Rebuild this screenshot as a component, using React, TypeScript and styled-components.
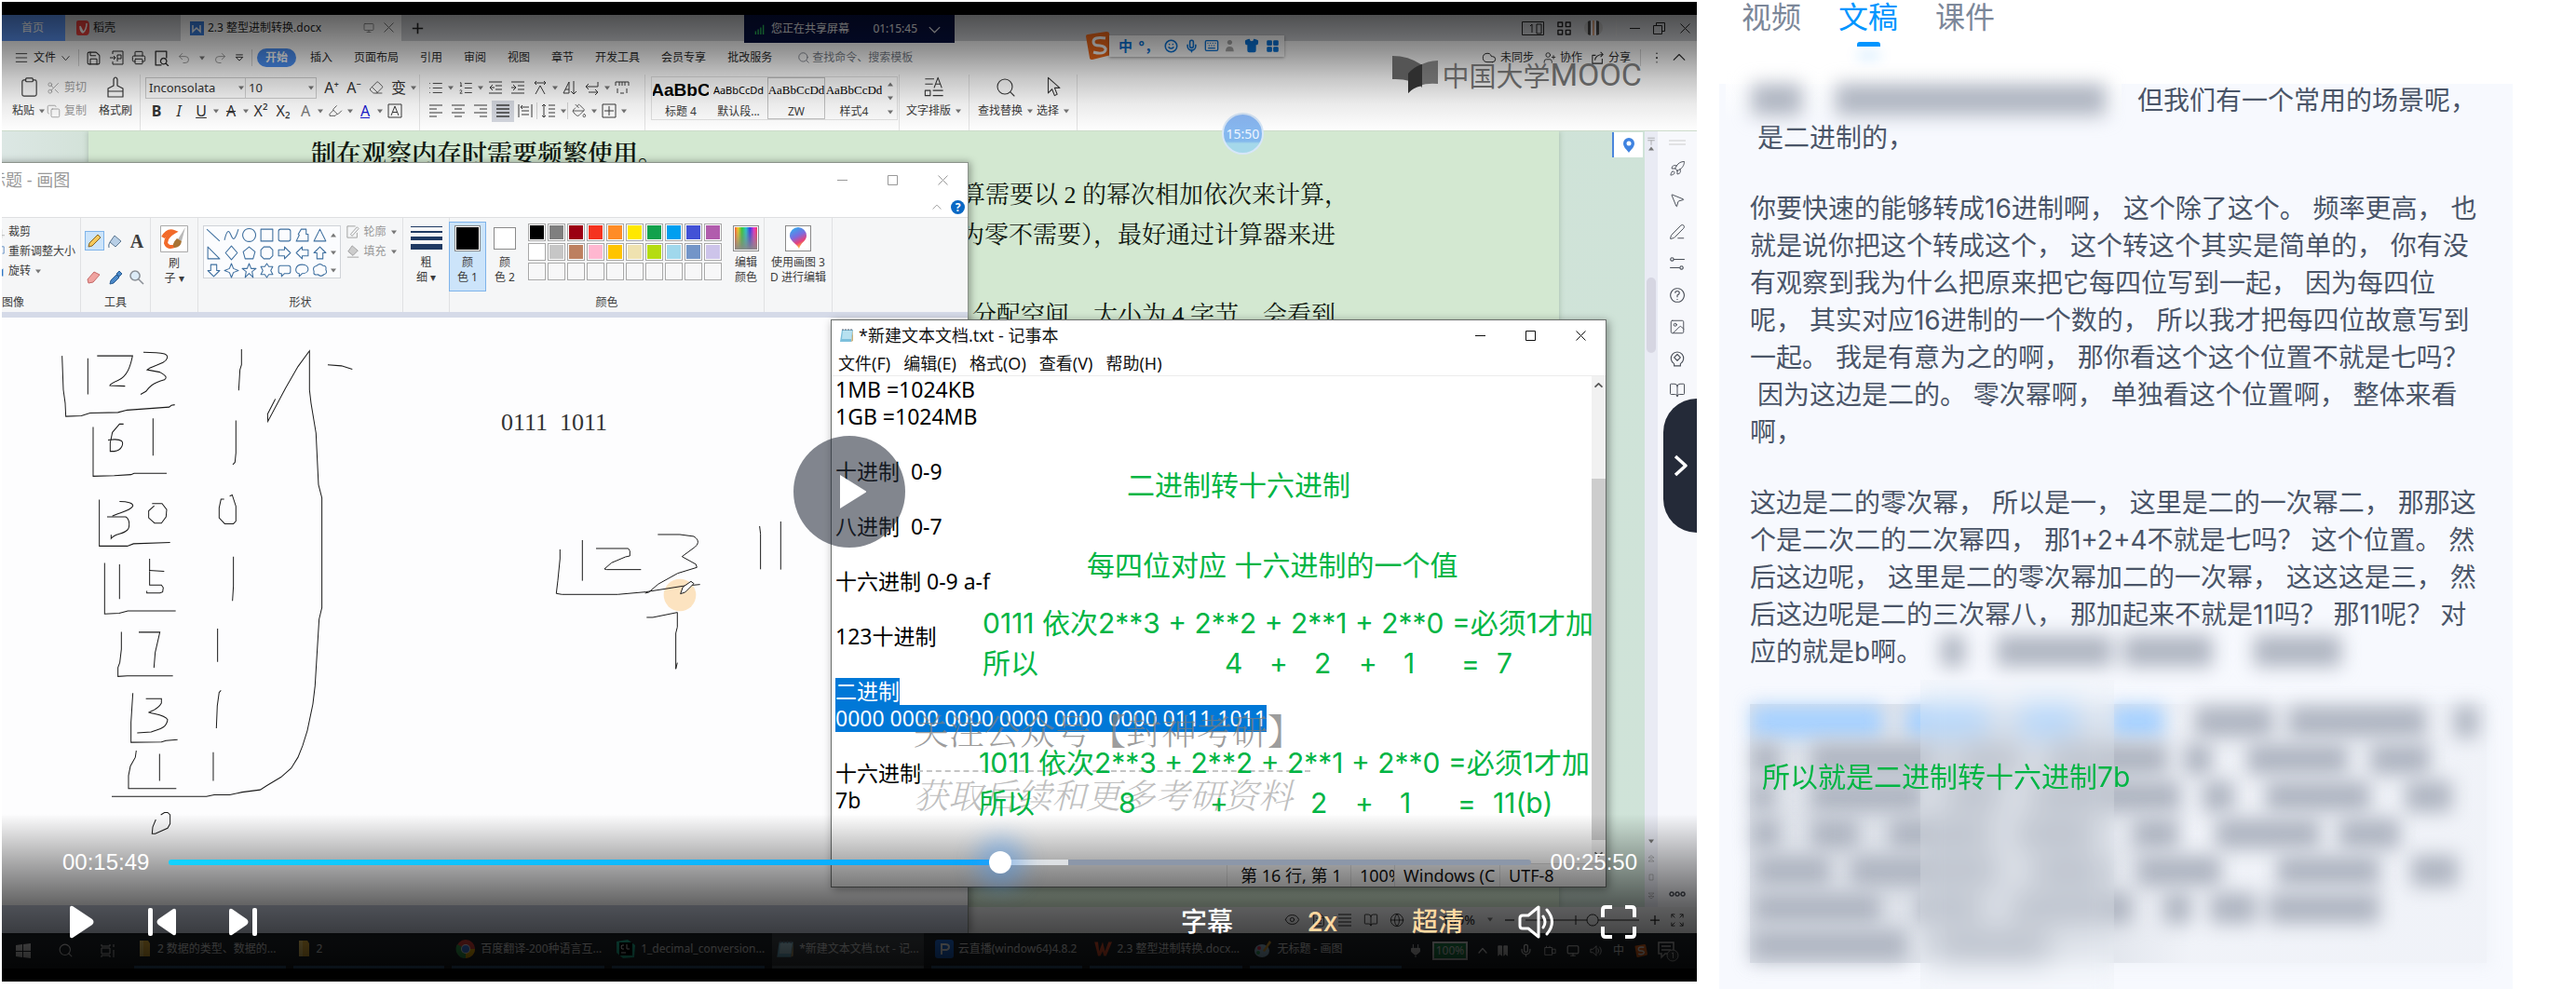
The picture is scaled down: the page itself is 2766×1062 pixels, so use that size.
import React from 'react';
import styled, { createGlobalStyle, css } from 'styled-components';
import {
  Save, Printer, Undo2, Redo2, Search, Cloud, UserPlus, Rocket, MousePointer2, PenLine,
  Eraser, Scissors, Copy, List, ListOrdered, Globe, BookOpen, Eye, LayoutGrid, Smile, Mic,
  Keyboard, Shirt, Monitor, Image as ImageIcon, FileText, Clipboard, Highlighter, PaintBucket,
} from 'lucide-react';

const WIN = '"Noto Sans", "Noto Sans CJK SC", sans-serif';
const MAC = 'Inter, "Noto Sans CJK SC", sans-serif';
const SERIF = '"Liberation Serif", "Noto Serif CJK SC", "Noto Sans CJK SC", serif';
const GREEN = '#00b544';

const Global = createGlobalStyle`
  * { box-sizing: border-box; }
  body { margin: 0; background: #fff; font-family: ${WIN}; }
  button { appearance: none; border: 0; background: none; padding: 0; margin: 0; color: inherit; font: inherit; cursor: pointer; }
  p { margin: 0; }
  svg { display: block; flex: none; }
`;

const Page = styled.div`
  display: grid;
  grid-template-columns: minmax(0, 1fr) 944px;
  min-height: 100vh;
  padding-left: 2px;
`;

/* ---------- player shell ---------- */

const Player = styled.section`
  position: relative;
  align-self: start;
  margin-top: 2px;
  padding: 14px 0;
  background: #000;
  overflow: hidden;
`;
const Frame = styled.div`
  position: relative;
  aspect-ratio: 16 / 9;
  overflow: hidden;
  display: flex;
  flex-direction: column;
  background: #fff;
`;
const TopShade = styled.div`
  position: absolute;
  inset: 0 0 auto 0;
  height: 126px;
  pointer-events: none;
  background: linear-gradient(rgba(0,0,0,.62), rgba(0,0,0,.42) 30%, rgba(0,0,0,.22) 54%, rgba(0,0,0,.08) 76%, transparent);
`;
const BottomShade = styled.div`
  position: absolute;
  inset: auto 0 0 0;
  height: 166px;
  pointer-events: none;
  background: linear-gradient(transparent, rgba(0,0,0,.33) 31%, rgba(0,0,0,.6) 58%, rgba(0,0,0,.7) 76%, rgba(0,0,0,.85));
`;

/* ---------- word processor ---------- */

const Line = styled.div<{ $h: number }>`
  width: 1px;
  height: ${p => p.$h}px;
  background: #d5d5d5;
  flex: none;
`;
const TabBar = styled.div`
  display: flex;
  align-items: center;
  height: 28px;
  flex: none;
  background: #cfd1d5;
  font-size: 12px;
  line-height: 28px;
  color: #222;
`;
const DocTab = styled.button<{ $w: number; $pad: number; $tone?: 'home' | 'active' }>`
  display: flex;
  align-items: center;
  gap: 4px;
  width: ${p => p.$w}px;
  height: 28px;
  padding-left: ${p => p.$pad}px;
  ${p => p.$tone === 'home' && css`background: #5a92f0; color: #fff;`}
  ${p => p.$tone === 'active' && css`background: #fff;`}
`;
const TabTail = styled.span`
  display: flex;
  gap: 10px;
  margin-left: auto;
  padding-right: 8px;
  color: #777;
`;
const AddTab = styled.button`
  width: 34px;
  display: grid;
  place-items: center;
`;
const BarEnd = styled.div<{ $gap: number; $pr: number }>`
  margin-left: auto;
  display: flex;
  align-items: center;
  gap: ${p => p.$gap}px;
  padding-right: ${p => p.$pr}px;
`;
const Avatar = styled.span`
  width: 20px;
  height: 16px;
  border-radius: 8px;
  background: linear-gradient(90deg, #bbb 0 20%, #444 20% 35%, #e6e6ee 35% 45%, #d9a27c 45% 55%, #e6e6ee 55% 65%, #444 65% 80%, #bbb 80%);
`;
const MenuBar = styled.nav`
  display: flex;
  align-items: center;
  height: 36px;
  flex: none;
  font-size: 12px;
  line-height: 20px;
  color: #2b2b2b;
  background: #fff;
`;
const FileMenu = styled.button`
  display: flex;
  align-items: center;
  gap: 6px;
  width: 82px;
  padding-left: 14px;
`;
const QuickTools = styled.div`
  display: flex;
  align-items: center;
  gap: 8px;
  padding: 0 8px 0 7px;
`;
const MenuItems = styled.div`
  display: flex;
  align-items: center;
  gap: 23px;
`;
const StartPill = styled.button`
  width: 42px;
  height: 20px;
  border-radius: 10px;
  margin: 0 -8px 0 5px;
  background: #4a90f5;
  color: #fff;
  font-weight: 700;
`;
const CommandSearch = styled.label`
  display: flex;
  align-items: center;
  margin-left: 27px;
  gap: 2px;
  color: #7a7f8a;
  input { width: 130px; border: 0; padding: 0; background: none; font: inherit; line-height: 20px; }
  input::placeholder { color: #7a7f8a; opacity: 1; }
`;
const IconText = styled.button`
  display: flex;
  align-items: center;
  gap: 4px;
`;
const Ribbon = styled.div`
  display: flex;
  height: 61px;
  flex: none;
  background: #fff;
  font-size: 12px;
  line-height: 20px;
  color: #3a3a3a;
  border-bottom: 1px solid #cddccb;
`;
const RGroup = styled.div<{ $w?: number; $pl?: number }>`
  display: flex;
  flex: none;
  padding-top: 2px;
  padding-left: ${p => p.$pl ?? 5}px;
  ${p => p.$w && css`width: ${p.$w}px;`}
  border-right: 1px solid #e4e4e4;
`;
const Big = styled.button<{ $w: number }>`
  display: flex;
  flex-direction: column;
  align-items: center;
  justify-content: space-between;
  width: ${p => p.$w}px;
  height: 47px;
  white-space: nowrap;
`;
const Stack = styled.div<{ $w?: number; $dim?: boolean }>`
  display: flex;
  flex-direction: column;
  gap: 1px;
  ${p => p.$w && css`width: ${p.$w}px;`}
  ${p => p.$dim && css`color: #9a9a9a;`}
`;
const ToolRow = styled.div`
  display: flex;
  align-items: center;
  height: 24px;
`;
const Tool = styled.button<{ $caret?: boolean; $on?: boolean }>`
  display: flex;
  align-items: center;
  width: ${p => (p.$caret ? 32 : 24)}px;
  height: 23px;
  background: ${p => (p.$on ? '#d5d8e0' : 'none')};
  > span:first-child, > svg:first-child { width: 24px; text-align: center; }
`;
const Glyph = styled.span<{ $c?: string; $b?: boolean; $i?: boolean; $u?: boolean; $s?: boolean }>`
  font-size: 16px;
  line-height: 20px;
  color: ${p => p.$c ?? '#333'};
  font-weight: ${p => (p.$b ? 700 : 400)};
  font-style: ${p => (p.$i ? 'italic' : 'normal')};
  text-decoration: ${p => (p.$u ? 'underline' : p.$s ? 'line-through' : 'none')};
`;
const FontBox = styled.div`
  display: flex;
  align-items: center;
  width: 184px;
  height: 23px;
  margin-right: 4px;
  border: 1px solid #cfcfcf;
`;
const Pick = styled.select<{ $w: number }>`
  appearance: none;
  width: ${p => p.$w}px;
  height: 21px;
  padding: 0 3px;
  border: 0;
  background: none;
  font: 13px/20px ${WIN};
  color: #333;
`;
const StyleBox = styled.div`
  display: flex;
  width: 270px;
  height: 47px;
  border: 1px solid #e2e2e2;
  margin: 0 1px 0 2px;
`;
const StyleCard = styled.button<{ $w: number; $on?: boolean }>`
  width: ${p => p.$w}px;
  height: 45px;
  border: 1px solid ${p => (p.$on ? '#c4c4c4' : 'transparent')};
  display: flex;
  flex-direction: column;
  align-items: center;
  justify-content: space-between;
  overflow: hidden;
`;
const Sample = styled.span<{ $f: string; $s: number; $b?: boolean }>`
  font-family: ${p => p.$f};
  font-size: ${p => p.$s}px;
  font-weight: ${p => (p.$b ? 700 : 400)};
  line-height: 26px;
  color: #000;
`;
const Carets = styled.span`
  display: flex;
  flex-direction: column;
  justify-content: space-around;
  margin: 0 auto;
`;

/* ---------- document area ---------- */

const DocArea = styled.div`
  flex: 1;
  min-height: 0;
  display: flex;
  overflow: hidden;
  background: linear-gradient(90deg, #dce7e4, #d3e2d9 90px, #cfe3d8);
`;
const Sheet = styled.div`
  flex: 1;
  margin: 0 57px 0 93px;
  padding: 4px 240px 0 239px;
  background: #d3e8d1;
  box-shadow: 0 0 6px rgba(80,110,80,.35);
  font-family: ${SERIF};
  font-size: 26px;
  line-height: 43px;
  color: #101810;
  white-space: nowrap;
`;
const Strong = styled.p`
  font-weight: 600;
  font-size: 27px;
`;
const RightLine = styled.p<{ $hang?: boolean }>`
  display: flex;
  justify-content: flex-end;
  min-height: 43px;
  margin-right: ${p => (p.$hang ? '-14px' : '0')};
`;
const PinCol = styled.div`
  width: 35px;
  padding-top: 1px;
`;
const PinBox = styled.button`
  display: grid;
  place-items: center;
  width: 33px;
  height: 27px;
  border-left: 2px solid #4a86dc;
  background: #fff;
`;
const ScrollCol = styled.div`
  width: 14px;
  background: #e9ebf4;
  display: flex;
  flex-direction: column;
  align-items: center;
  padding-top: 6px;
  color: #888;
`;
const ScrollThumb = styled.div`
  width: 10px;
  height: 81px;
  margin-top: 136px;
  border-radius: 5px;
  background: #d6d6e2;
`;
const ScrollEnd = styled.div`
  display: flex;
  flex-direction: column;
  align-items: center;
  gap: 12px;
  margin: auto 0 8px;
`;
const SideTools = styled.div`
  width: 42px;
  background: #f7f8fc;
  display: flex;
  flex-direction: column;
  align-items: center;
  gap: 16px;
  padding: 9px 0 10px;
  color: #4a4f58;
  > svg:last-child { margin-top: auto; }
`;
const StatusBar = styled.div`
  display: flex;
  align-items: center;
  justify-content: flex-end;
  gap: 12px;
  height: 28px;
  padding-right: 14px;
  flex: none;
  background: #f0f1f3;
  font-size: 14px;
  line-height: 20px;
  color: #222;
`;
const TaskBar = styled.div`
  display: flex;
  align-items: stretch;
  height: 38px;
  flex: none;
  background: #20262b;
  color: #e8e8e8;
  font-size: 12px;
  line-height: 36px;
`;
const StartIcons = styled.div`
  display: flex;
  align-items: center;
  gap: 29px;
  width: 143px;
  padding-left: 15px;
`;
const Task = styled.button<{ $on?: boolean }>`
  display: flex;
  align-items: center;
  gap: 5px;
  width: 164px;
  margin-right: 8px;
  padding: 0 4px;
  border-bottom: 3px solid ${p => (p.$on ? '#6c7a86' : '#3f6f9c')};
  background: ${p => (p.$on ? '#42484d' : 'none')};
  white-space: nowrap;
  text-align: left;
`;
const Tray = styled.div`
  display: flex;
  align-items: center;
  gap: 11px;
  margin-left: auto;
  padding-right: 18px;
`;
const Battery = styled.span`
  width: 38px;
  height: 20px;
  border: 2px solid #ddd;
  background: #1f8a4c;
  font-size: 12px;
  line-height: 16px;
  text-align: center;
`;

/* ---------- floating items on the desktop ---------- */

const ShareBanner = styled.div`
  position: absolute;
  left: 797px;
  top: 0;
  width: 226px;
  height: 30px;
  display: flex;
  align-items: center;
  padding: 0 15px 0 11px;
  background: #061040;
  color: #eee;
  font-size: 12px;
  line-height: 30px;
  svg:first-child { margin-right: 7px; }
  time { margin-left: auto; margin-right: 12px; }
`;
const ImeBar = styled.div`
  position: absolute;
  left: 1163px;
  top: 19px;
  width: 214px;
  height: 28px;
  display: flex;
  align-items: center;
`;
const ImeTools = styled.div`
  display: flex;
  align-items: center;
  justify-content: space-between;
  flex: 1;
  height: 23px;
  margin-left: -4px;
  padding: 0 5px 0 10px;
  background: #fff;
  box-shadow: 0 1px 3px rgba(0,0,0,.35);
  color: #0a76dc;
  font-size: 15px;
  line-height: 20px;
  font-weight: 700;
`;
const Brand = styled.div`
  position: absolute;
  right: 59px;
  top: 43px;
  display: flex;
  align-items: center;
  gap: 4px;
  height: 42px;
  color: rgba(78,78,78,.85);
  font-size: 29px;
  line-height: 42px;
  font-family: "Noto Sans CJK SC", sans-serif;
`;
const BrandLatin = styled.span`
  font: 400 34px/42px Roboto, sans-serif;
`;
const BrandText = styled.span`
  display: flex;
`;
const Bubble = styled.div`
  position: absolute;
  left: 1310px;
  top: 105px;
  width: 45px;
  height: 45px;
  border: 2px solid #d7e7f8;
  border-radius: 50%;
  background: linear-gradient(#8cb8f5, #82b8ec 70%, #a5d8ea 76%);
  color: #eef6ff;
  font-size: 14px;
  line-height: 41px;
  text-align: center;
`;

/* ---------- paint window ---------- */

const PaintWindow = styled.section`
  position: absolute;
  left: -60px;
  top: 158px;
  width: 1098px;
  bottom: 38px;
  display: flex;
  flex-direction: column;
  background: #fff;
  border: solid #8b938b;
  border-width: 1px 1px 0 0;
  box-shadow: 2px 0 8px rgba(0,0,0,.35);
  font-size: 12px;
  line-height: 16px;
  color: #3c3c3c;
`;
const PaintTitle = styled.header`
  display: flex;
  align-items: center;
  height: 36px;
  padding: 0 21px 0 28px;
  font-size: 18px;
  line-height: 24px;
  color: #999;
`;
const WinButtons = styled.div<{ $gap: number }>`
  margin-left: auto;
  display: flex;
  align-items: center;
  gap: ${p => p.$gap}px;
`;
const PaintHelp = styled.div`
  display: flex;
  align-items: center;
  justify-content: flex-end;
  gap: 10px;
  height: 22px;
  padding-right: 3px;
`;
const HelpDot = styled.button`
  width: 15px;
  height: 15px;
  border-radius: 50%;
  background: #0a68c4;
  color: #fff;
  font-size: 12px;
  line-height: 15px;
  font-weight: 700;
`;
const PaintRibbon = styled.div`
  display: flex;
  height: 102px;
  background: #f5f6f7;
  border-top: 1px solid #dfe0e2;
`;
const PGroup = styled.div<{ $w: number }>`
  width: ${p => p.$w}px;
  flex: none;
  display: flex;
  flex-direction: column;
  justify-content: space-between;
  align-items: center;
  padding: 4px 0 2px;
  border-right: 1px solid #e0e1e3;
`;
const PBody = styled.div`
  display: flex;
  align-items: flex-start;
`;
const ImageTools = styled.div`
  display: flex;
  flex-direction: column;
  gap: 5px;
  width: 100%;
  padding: 3px 0 0 50px;
`;
const ToolGrid = styled.div`
  display: grid;
  grid-template-columns: repeat(3, 21px);
  grid-auto-rows: 21px;
  gap: 18px 2px;
  padding-top: 10px;
`;
const PTool = styled.button<{ $on?: boolean }>`
  width: 21px;
  height: 21px;
  display: grid;
  place-items: center;
  border: 1px solid ${p => (p.$on ? '#7fb4ea' : 'transparent')};
  background: ${p => (p.$on ? '#cce4fa' : 'none')};
  font: 700 20px/20px "Liberation Serif", serif;
`;
const PBig = styled.button<{ $on?: boolean; $w: number }>`
  width: ${p => p.$w}px;
  height: 75px;
  display: flex;
  flex-direction: column;
  align-items: center;
  padding-top: 3px;
  gap: 4px;
  border: 1px solid ${p => (p.$on ? '#7fb4ea' : 'transparent')};
  background: ${p => (p.$on ? '#cce4fa' : 'none')};
`;
const Well = styled.span<{ $c: string; $s: number }>`
  display: grid;
  place-items: center;
  width: ${p => p.$s}px;
  height: ${p => p.$s}px;
  margin: ${p => (28 - p.$s) / 2}px 0;
  border: 1px solid #8a8a8a;
  background: ${p => p.$c};
  box-shadow: inset 0 0 0 1px #fff;
`;
const PDim = styled.div`
  display: flex;
  flex-direction: column;
  gap: 5px;
  padding: 3px 0 0 6px;
  color: #999;
`;
const Palette = styled.div`
  display: grid;
  grid-template-columns: repeat(10, 19px);
  gap: 2px;
  padding: 2px 6px 0 5px;
`;
const Swatch = styled.button<{ $c: string }>`
  height: 19px;
  border: 1px solid #a8a8a8;
  background: ${p => p.$c};
  box-shadow: inset 0 0 0 1px #fff;
`;
const ShapeBox = styled.div`
  display: grid;
  grid-template-columns: repeat(7, 17px) 8px;
  gap: 2px;
  align-items: center;
  width: 148px;
  height: 57px;
  padding: 1px 2px;
  margin-top: 4px;
  border: 1px solid #d0d3d8;
  background: #fbfcfe;
`;
const Strip = styled.div`
  height: 6px;
  background: #d5dae8;
`;
const PaintCanvas = styled.div`
  position: relative;
  flex: 1;
  margin-left: 60px;
  background: #fdfdfe;
  overflow: hidden;
`;
const CanvasText = styled.p`
  position: absolute;
  left: 536px;
  top: 98px;
  font: 26px/30px "Liberation Serif", serif;
  color: #333;
  white-space: pre;
`;
const Workspace = styled.div`
  height: 30px;
  background: #c5ccdc;
`;

/* ---------- notepad window ---------- */

const Notepad = styled.section`
  position: absolute;
  left: 890px;
  top: 327px;
  width: 833px;
  height: 610px;
  display: flex;
  flex-direction: column;
  background: #fff;
  border: 1px solid #6b6f6d;
  box-shadow: 2px 2px 9px rgba(0,0,0,.4);
  color: #111;
  font-size: 18px;
  line-height: 24px;
`;
const NoteTitle = styled.header`
  display: flex;
  align-items: center;
  gap: 5px;
  height: 32px;
  padding: 0 21px 0 8px;
`;
const NoteMenu = styled.nav`
  display: flex;
  gap: 14px;
  height: 28px;
  padding-left: 7px;
  border-bottom: 1px solid #ececec;
  line-height: 28px;
`;
const NoteBody = styled.div`
  flex: 1;
  display: flex;
  justify-content: space-between;
  min-height: 0;
`;
const NoteText = styled.div`
  display: flex;
  flex-direction: column;
  gap: 30px;
  padding: 0 0 0 4px;
  font-size: 23px;
  line-height: 29px;
  color: #000;
  white-space: pre;
`;
const Selected = styled.span`
  display: table;
  height: 29px;
  background: #0078d7;
  color: #fff;
`;
const NoteScroll = styled.div`
  width: 15px;
  display: flex;
  flex-direction: column;
  justify-content: space-between;
  align-items: center;
  padding: 5px 0;
  background: #f1f1f1;
`;
const NoteThumb = styled.div`
  width: 15px;
  flex: 1;
  margin: 96px 0 11px;
  background: #cdcdcd;
`;
const NoteStatus = styled.footer`
  display: grid;
  grid-template-columns: 133px 47px 113px 114px;
  justify-content: end;
  height: 25px;
  background: #f0f0f0;
  border-top: 1px solid #d7d7d7;
  white-space: nowrap;
`;
const NoteCell = styled.span`
  overflow: hidden;
  border-left: 1px solid #d7d7d7;
  padding-left: 9px;
  &:first-child { padding-left: 14px; }
`;
const GhostLine = styled.p<{ $y: number; $s: number; $c: string; $i?: boolean }>`
  position: absolute;
  left: 979px;
  top: ${p => p.$y}px;
  width: 424px;
  font-family: ${SERIF};
  font-weight: 300;
  font-size: ${p => p.$s}px;
  line-height: 44px;
  font-style: ${p => (p.$i ? 'italic' : 'normal')};
  color: ${p => p.$c};
  white-space: nowrap;
`;
const GhostRule = styled.div`
  position: absolute;
  left: 983px;
  top: 811px;
  width: 422px;
  border-top: 2px dashed #c4c4c4;
`;

/* ---------- annotations and player controls ---------- */

const Note = styled.div<{ $x: number; $y: number }>`
  position: absolute;
  left: ${p => p.$x}px;
  top: ${p => p.$y}px;
  font-family: ${MAC};
  font-size: 30px;
  line-height: 43px;
  color: ${GREEN};
  white-space: nowrap;
`;
const Terms = styled.div<{ $cols: string }>`
  display: grid;
  grid-template-columns: ${p => p.$cols};
`;
const CenterPlay = styled.button`
  position: absolute;
  left: 50%;
  top: 50%;
  width: 120px;
  height: 120px;
  margin: -60px;
  border-radius: 50%;
  display: grid;
  place-items: center;
  background: rgba(36,42,56,.57);
`;
const Drawer = styled.button`
  position: absolute;
  right: 0;
  top: 426px;
  width: 36px;
  height: 144px;
  border-radius: 36px 0 0 36px;
  display: grid;
  place-items: center;
  background: #242a38;
`;
const Controls = styled.div`
  position: absolute;
  inset: auto 0 0 0;
  padding: 0 64px 44px 65px;
  color: #fff;
`;
const TimeRow = styled.div`
  display: flex;
  align-items: center;
  gap: 21px;
  height: 30px;
  font: 24px/30px "Liberation Sans", sans-serif;
`;
const Seek = styled.input`
  appearance: none;
  flex: 1;
  min-width: 0;
  height: 6px;
  margin: 0;
  border-radius: 3px;
  background: linear-gradient(90deg, #12d2ff, #08a6ff 61%, #dde0e3 61% 66%, #8c97a9 66%);
  &::-webkit-slider-thumb {
    appearance: none;
    width: 24px;
    height: 24px;
    border-radius: 50%;
    background: #fff;
    box-shadow: 0 0 24px 14px rgba(70,150,240,.45);
  }
`;
const ButtonRow = styled.div`
  display: flex;
  align-items: center;
  height: 40px;
  margin-top: 29px;
`;
const Cluster = styled.div<{ $gap: number; $end?: boolean }>`
  display: flex;
  align-items: center;
  gap: ${p => p.$gap}px;
  margin-left: ${p => (p.$end ? 'auto' : '0')};
  margin-right: ${p => (p.$end ? '56px' : '0')};
`;
const IconButton = styled.button`
  width: 40px;
  height: 40px;
  display: grid;
  place-items: center;
`;
const TextButton = styled.button<{ $warm?: boolean }>`
  width: 60px;
  font: 500 28px/36px ${MAC};
  color: ${p => (p.$warm ? '#ffd9a1' : '#fff')};
`;

/* ---------- transcript ---------- */

const Sidebar = styled.aside`
  display: flex;
  flex-direction: column;
  padding: 0 68px 0 24px;
  font-family: ${MAC};
`;
const Tabs = styled.div`
  display: flex;
  gap: 40px;
  height: 50px;
  margin-bottom: 40px;
  padding-left: 24px;
`;
const Tab = styled.button<{ $on?: boolean }>`
  display: flex;
  flex-direction: column;
  align-items: center;
  justify-content: space-between;
  font-size: 32px;
  line-height: 38px;
  color: ${p => (p.$on ? '#0095ff' : '#7c8799')};
`;
const TabMark = styled.span`
  width: 25px;
  height: 5px;
  border-radius: 3px 3px 0 0;
  background: #0095ff;
  box-shadow: 0 12px 14px rgba(0,149,255,.28);
`;
const Script = styled.article`
  position: relative;
  flex: 1;
  padding: 0 28px 0 33px;
  background: #f7f9fe;
  color: #4a5568;
  font-size: 28px;
  line-height: 40px;
`;
const Para = styled.p`
  margin-bottom: 36px;
  white-space: pre;
  &:first-of-type { margin-top: -2px; }
`;
const Smear = styled.span`
  display: inline-flex;
  align-items: center;
  height: 38px;
  vertical-align: top;
  filter: blur(10px);
`;
const Blob = styled.span<{ $skip: number; $w: number; $blue?: boolean }>`
  width: ${p => p.$w}px;
  margin-left: ${p => p.$skip}px;
  height: 34px;
  background: ${p => (p.$blue ? '#a6d1ff' : '#b0b6c2')};
`;
const SmearRows = styled.div`
  display: flex;
  flex-direction: column;
  gap: 2px;
  background: linear-gradient(90deg, rgba(176,184,196,.32), rgba(176,184,196,.36) 45%, rgba(190,196,206,.12) 60%, rgba(190,196,206,.12));
  box-shadow: 0 0 16px 4px rgba(200,205,214,.12);
`;
const Haze = styled.div`
  position: absolute;
  left: 216px;
  top: 640px;
  width: 208px;
  bottom: 0;
  background: rgba(236,239,243,.2);
  backdrop-filter: blur(12px);
`;
const HeadHaze = styled.div`
  position: absolute;
  left: 7px;
  top: -17px;
  width: 425px;
  height: 57px;
  background: linear-gradient(#fff, rgba(247,249,254,.2));
`;
const ScriptNote = styled.p`
  position: absolute;
  left: 46px;
  top: 724px;
  font-size: 30px;
  color: ${GREEN};
  white-space: nowrap;
`;

/* ---------- small drawings ---------- */

type PProps = { d: string; s?: number; w?: number; h?: number; vb?: string; sw?: number; fill?: string; c?: string };
const P = ({ d, s = 16, w, h, vb = '0 0 16 16', sw = 1, fill = 'none', c = 'currentColor' }: PProps) => (
  <svg width={w ?? s} height={h ?? s} viewBox={vb} fill={fill} stroke={c} strokeWidth={sw} strokeLinejoin="round">
    <path d={d} />
  </svg>
);
const Caret = ({ up }: { up?: boolean }) => (
  <svg width="8" height="5" viewBox="0 0 8 5"><path d={up ? 'M1 4.500h6L4 .5z' : 'M1 .5h6L4 4.500z'} fill="#777" /></svg>
);
const Min = ({ c = 'currentColor' }) => <P s={11} vb="0 0 11 11" d="M0 5.500h11" c={c} />;
const Max = ({ c = 'currentColor' }) => <P s={11} vb="0 0 11 11" d="M.5.5h10v10h-10z" c={c} />;
const Close = ({ c = 'currentColor' }) => <P s={11} vb="0 0 11 11" d="M.5.5l10 10M10.500.5l-10 10" c={c} />;
const Folder = () => (
  <svg width="16" height="20" viewBox="0 0 16 20"><path d="M2 1h9l2 3v14H2z" fill="#f0b93c" /><path d="M2 1h4v17H2z" fill="#ffd970" /></svg>
);
const NotepadIcon = ({ s = 16 }) => (
  <svg width={s} height={s} viewBox="0 0 16 16">
    <path d="M3 2h12l-2 13H1z" fill="#7cc0dc" /><path d="M4 3h10l-1 9H3z" fill="#b7e1f0" /><path d="M4 1v2M7 1v2M10 1v2M13 1v2" stroke="#667" />
    <path d="M13 15l2-13v12z" fill="#c9b079" />
  </svg>
);
const SogouIcon = ({ s = 30 }) => (
  <svg width={s} height={s} viewBox="0 0 30 30">
    <path d="M1 5Q1 3 3 3L23 0Q26 0 26 2L30 22Q30 25 28 25L8 30Q5 30 5 28z" fill="#f26a1b" />
    <path d="M22 7Q9 5 9 11Q9 15 16 15Q23 16 22 20Q20 25 9 22" fill="none" stroke="#fff" strokeWidth="3" />
  </svg>
);
const lines = (a: number[][]) => a.map(([x1, x2, y]) => `M${x1} ${y}H${x2}`).join('');
const JUST = lines([[1, 15, 2], [1, 15, 6], [1, 15, 10], [1, 15, 14]]);
const LEFT = lines([[1, 15, 2], [1, 9, 6], [1, 15, 10], [1, 9, 14]]);
const CENTER = lines([[1, 15, 2], [4, 12, 6], [1, 15, 10], [4, 12, 14]]);
const RIGHT = lines([[1, 15, 2], [7, 15, 6], [1, 15, 10], [7, 15, 14]]);

const SHAPES = [
  'M1 2l13 12', 'M1 13C4 0 6 4 8 9S12 12 15 2', 'M8 1.500a6.500 6.500 0 1 0 .1 0z', 'M2 2h12v12H2z', 'M4 2h8q2 0 2 2v8q0 2-2 2H4q-2 0-2-2V4q0-2 2-2z', 'M2 14l3-6-1-1 3-5h5v5h2v7z', 'M8 2l6 12H2z',
  'M2 2v12h12z', 'M8 1l6 7-6 7-6-7z', 'M8 2l6 5-2 7H4L2 7z', 'M5 2h6l3 3v6l-3 3H5l-3-3V5z', 'M2 5h6V2l6 6-6 6v-3H2z', 'M14 5H8V2L2 8l6 6v-3h6z', 'M5 14V8H2l6-6 6 6h-3v6z',
  'M5 2v6H2l6 6 6-6h-3V2z', 'M8 1l2 5 5 2-5 2-2 5-2-5-5-2 5-2z', 'M8 1l2 5h5l-4 3 1 6-4-4-4 4 1-6-4-3h5z', 'M8 1l2 3h4l-2 4 2 4h-4l-2 3-2-3H2l2-4-2-4h4z', 'M4 3h8q2 0 2 2v4q0 2-2 2H8l-3 3v-3H4q-2 0-2-2V5q0-2 2-2z', 'M8 2C0 2 0 11 5 11v3l3-3C16 11 16 2 8 2z', 'M5 3Q8 0 11 3 15 3 14 7 16 11 12 12 9 15 6 12 1 13 2 9 0 4 5 3z',
];
const COLORS = ['#000', '#7f7f7f', '#9b0012', '#f5331f', '#ff8c26', '#ffe800', '#12a14c', '#009ff0', '#4352d6', '#b15cad', '#fff', '#c6c6c6', '#bd8060', '#ffb7d0', '#ffc400', '#efe2b0', '#b5dc12', '#a0d8ec', '#7395c8', '#cdc4ea', ...Array(10).fill('#f7f7f8')];

const STROKES = [
  'M200 118L204 220L210 260L212 300L262 298L290 290L380 288L410 281L545 272L552 267L563 265', 'M283 125V234',
  'M313 118H427C420 150 410 180 380 192C365 198 355 204 354 207L403 209',
  'M462 107C490 107 510 107 530 112C545 118 540 130 525 138C505 148 485 150 474 160L515 167C540 180 537 185 530 190C490 200 480 212 470 225L453 234',
  'M778 98V145L773 160L769 222', 'M300 332V480L368 478L422 475L432 471H537',
  'M398 323H385L362 348L355 380V405H368C395 402 398 380 392 374C380 366 360 370 348 371', 'M493 306V418', 'M760 312V410L757 438L750 445',
  'M320 550V690H410L430 683L548 679', 'M385 556C410 556 430 560 428 570C420 585 380 590 362 600', 'M345 602H405C420 610 418 635 410 642C395 655 370 652 358 667V656',
  'M490 562H522L537 580L535 602L520 621H498L479 605V584L497 569', 'M722 549H712L706 575V605L724 623H752L760 615V570L748 536L740 540',
  'M337 741V894L384 892L412 885H566', 'M385 745V849', 'M482 728V807H520L526 815L524 828L515 831H473V825M480 763L529 766', 'M752 722V810L749 855',
  'M391 948V1000L386 1040L380 1055V1082L410 1080H557', 'M447 949H515L500 1010L496 1056', 'M701 938V1038',
  'M428 1132L422 1220V1280L520 1279L535 1275L572 1272', 'M470 1149H520V1162C510 1180 490 1185 480 1190C500 1196 530 1196 540 1212C535 1240 510 1240 487 1249L442 1252', 'M712 1124L706 1130L700 1170L697 1238',
  'M439 1305L436 1325L420 1352L414 1380V1419H568', 'M514 1315V1396', 'M687 1310V1396',
  'M360 1443H665L690 1438H740L780 1430L838 1423L860 1410L905 1385L938 1358L960 1325L975 1290L990 1245L1008 1165L1015 1110L1028 910L1037 875V545L1026 505L1018 350L1002 260L997 220V103L960 150L920 215L863 315L862 293L887 248',
  'M1056 145L1100 148L1135 158', 'M502 1512L492 1535L490 1555H500L540 1538L548 1525V1498L540 1491H530L518 1498',
];
const STROKES_MID = [
  'M304 750V780L297 850L292 892L310 895H490L580 887L700 868L755 863', 'M376 720V851', 'M420 747H524L529 755V771L515 774L470 793L447 813L455 815H565',
  'M619 702H690L735 708C755 720 750 735 735 745L697 773L742 798L745 808L683 827L620 862L590 888L578 891',
  'M583 969H603L682 953V1000L677 1020V1135L682 1115', 'M947 675L950 700V814', 'M1015 660V815',
];

const BLOBS: [number, number, boolean?][][] = [
  [[2, 140, true], [26, 90, true], [30, 66, true], [34, 56, true], [34, 84], [16, 148], [30, 26]],
  [[2, 30], [34, 140], [16, 70], [26, 130], [18, 30], [38, 108], [24, 64]],
  [[2, 24], [40, 120], [24, 60], [30, 162], [24, 34], [34, 112], [38, 50]],
  [[2, 30], [34, 50], [34, 110], [26, 86], [40, 48], [40, 112], [20, 66]],
  [[6, 80], [22, 160], [34, 80], [34, 90], [60, 110], [34, 50]],
  [[4, 136], [40, 70], [30, 130], [34, 30], [20, 50], [12, 120]],
  [[2, 166], [32, 120]],
];

const MENUS = ['插入', '页面布局', '引用', '审阅', '视图', '章节', '开发工具', '会员专享', '批改服务'];

function Writer() {
  return (
    <>
      <TabBar>
        <DocTab $w={68} $pad={21} $tone="home">首页</DocTab>
        <DocTab $w={124} $pad={12}>
          <svg width="14" height="16" viewBox="0 0 14 16"><path d="M2 0h8q4 0 4 5v6q0 5-4 5H2q-2 0-2-2V2q0-2 2-2z" fill="#e8403c" /><path d="M4 6q0 6 3 7 4-3 4-10M4 6l3 6" stroke="#fff" strokeWidth="1.500" fill="none" /></svg>
          稻壳
        </DocTab>
        <DocTab $w={237} $pad={10} $tone="active">
          <svg width="15" height="15" viewBox="0 0 15 15"><path d="M0 0h15v15H0z" fill="#3a7fe0" /><path d="M3 4v7l4-4 4 4V4" stroke="#fff" strokeWidth="1.500" fill="none" /></svg>
          2.3 整型进制转换.docx
          <TabTail><Monitor size={12} strokeWidth={1.5} /><Close /></TabTail>
        </DocTab>
        <AddTab aria-label="新建标签"><P s={13} d="M8 1v14M1 8h14" sw={2} /></AddTab>
        <BarEnd $gap={14} $pr={7}>
          <P w={24} h={15} vb="0 0 24 15" d="M.5.5h23v14H.5zM9 5l2-2v9M16 3h5v10h-5z" />
          <P s={15} d="M1 1h5v5H1zM10 1h5v5h-5zM1 10h5v5H1zM10 10h5v5h-5z" sw={1.5} />
          <Avatar />
          <Line $h={18} />
          <Min />
          <BarEnd $gap={16} $pr={0}><P s={13} vb="0 0 13 13" d="M.5 3.500h9v9h-9zM3.500 3.500v-3h9v9h-3" /><Close /></BarEnd>
        </BarEnd>
      </TabBar>
      <MenuBar>
        <FileMenu><P s={14} d="M1 3h14M1 8h14M1 13h14" />文件<P s={9} d="M1 4l7 8 7-8" sw={1.5} /></FileMenu>
        <Line $h={18} />
        <QuickTools>
          <Save size={17} strokeWidth={1.5} /><P s={16} d="M4 4V1h11v14H4v-3M1 8h6M5 6l2 2-2 2M9 12V5h4v4H9" /><Printer size={16} strokeWidth={1.5} />
          <P s={17} d="M13 8V1H2v14h6M10 8a3 3 0 1 0 .1 0M12 13l3 3" sw={1.2} />
          <Undo2 size={15} strokeWidth={1.5} color="#999" /><Caret /><Redo2 size={15} strokeWidth={1.5} color="#999" /><P s={10} d="M2 3h12M2 7h12l-6 6z" sw={1.5} />
        </QuickTools>
        <Line $h={18} />
        <MenuItems>
          <StartPill>开始</StartPill>
          {MENUS.map(m => <button key={m}>{m}</button>)}
        </MenuItems>
        <CommandSearch><Search size={14} strokeWidth={1.5} /><input aria-label="查找命令" placeholder="查找命令、搜索模板" /></CommandSearch>
        <BarEnd $gap={10} $pr={12}>
          <IconText><Cloud size={16} strokeWidth={1.5} />未同步</IconText>
          <IconText><UserPlus size={14} strokeWidth={1.5} />协作</IconText>
          <IconText><P s={14} d="M5 5H1v10h12V9M4 11Q5 4 14 4M11 1l3 3-3 3" sw={1.2} />分享</IconText>
          <Line $h={18} />
          <P s={14} d="M8 2v1M8 7v2M8 13v1" sw={2} />
          <P s={14} d="M1 11l7-7 7 7" sw={1.3} />
        </BarEnd>
      </MenuBar>
      <Ribbon>
        <RGroup $w={149} $pl={10}>
          <Big $w={38}><Clipboard size={23} strokeWidth={1.2} /><IconText as="span">粘贴<Caret /></IconText></Big>
          <Stack $w={50} $dim>
            <ToolRow><IconText><Scissors size={15} strokeWidth={1.3} />剪切</IconText></ToolRow>
            <ToolRow><IconText><Copy size={15} strokeWidth={1.3} />复制</IconText></ToolRow>
          </Stack>
          <Big $w={48}><P w={20} h={24} vb="0 0 20 24" d="M8 10V3q2-4 4 0v7l6 3v9H2v-9zM2 16h16" sw={1.2} />格式刷</Big>
        </RGroup>
        <RGroup $w={300} $pl={5}>
          <Stack>
            <ToolRow>
              <FontBox>
                <Pick $w={98} aria-label="字体"><option>Inconsolata</option></Pick><Caret />
                <Line $h={21} />
                <Pick $w={66} aria-label="字号"><option>10</option></Pick><Caret />
              </FontBox>
              <Tool><Glyph>A⁺</Glyph></Tool><Tool><Glyph>A⁻</Glyph></Tool><Tool><Eraser size={16} strokeWidth={1.2} /></Tool>
              <Tool $caret><Glyph>变</Glyph><Caret /></Tool>
            </ToolRow>
            <ToolRow>
              <Tool><Glyph $b>B</Glyph></Tool><Tool><Glyph $i>I</Glyph></Tool><Tool $caret><Glyph $u>U</Glyph><Caret /></Tool>
              <Tool $caret><Glyph $s>A</Glyph><Caret /></Tool><Tool><Glyph>X²</Glyph></Tool><Tool><Glyph>X₂</Glyph></Tool>
              <Tool $caret><Glyph $c="#777">A</Glyph><Caret /></Tool><Tool $caret><Highlighter size={16} strokeWidth={1.2} /><Caret /></Tool>
              <Tool $caret><Glyph $u $c="#1a1ad0">A</Glyph><Caret /></Tool><Tool><P s={16} d="M1 1h14v14H1zM4 13l4-10 4 10M5.500 9.500h5" /></Tool>
            </ToolRow>
          </Stack>
        </RGroup>
        <RGroup $w={242} $pl={5}>
          <Stack>
            <ToolRow>
              <Tool $caret><List size={17} strokeWidth={1.3} /><Caret /></Tool><Tool $caret><ListOrdered size={17} strokeWidth={1.3} /><Caret /></Tool>
              <Tool><P d="M1 2h14M8 6h7M8 10h7M1 14h14M5 5L2 8l3 3M2 8h5" /></Tool><Tool><P d="M1 2h14M8 6h7M8 10h7M1 14h14M3 5l3 3-3 3M1 8h5" /></Tool>
              <Tool $caret><P d="M2 3h12M4 1L2 3l2 2M12 1l2 2-2 2M3 15L8 6l5 9" /><Caret /></Tool><Tool><P d="M1 14L7 2v12zM3 10h4M12 1v14M9 12l3 3 3-3" /></Tool>
              <Tool $caret><P d="M14 2v5H2M4 4L1 7l3 3M4 13h10M11 10l3 3-3 3" /><Caret /></Tool><Tool><P d="M1 6V2h14v4M5 2v4M8 2v4M11 2v4M3 9v5M13 9v5M6 14h4" /></Tool>
            </ToolRow>
            <ToolRow>
              <Tool><P d={LEFT} /></Tool><Tool><P d={CENTER} /></Tool><Tool><P d={RIGHT} /></Tool><Tool $on><P d={JUST} sw={1.3} /></Tool>
              <Tool><P d="M1 1v14M15 1v14M4 4h8M4 8h8M4 12h8M5 2L3 4l2 2" /></Tool>
              <Line $h={18} />
              <Tool $caret><P d="M8 2h7M8 6h7M8 10h7M8 14h7M3 1v14M1 3l2-2 2 2M1 13l2 2 2-2" /><Caret /></Tool>
              <Line $h={18} />
              <Tool $caret><PaintBucket size={16} strokeWidth={1.2} /><Caret /></Tool><Tool $caret><P d="M1 1h14v14H1zM8 3v10M3 8h10" /><Caret /></Tool>
            </ToolRow>
          </Stack>
        </RGroup>
        <RGroup $w={273} $pl={4}>
          <StyleBox>
            <StyleCard $w={62}><Sample $f='"Liberation Sans", sans-serif' $s={19} $b>AaBbC</Sample>标题 4</StyleCard>
            <StyleCard $w={62}><Sample $f='"Noto Sans", sans-serif' $s={11}>AaBbCcDd</Sample>默认段...</StyleCard>
            <StyleCard $w={62} $on><Sample $f='"Liberation Serif", serif' $s={13}>AaBbCcDd</Sample>ZW</StyleCard>
            <StyleCard $w={62}><Sample $f='"Liberation Serif", serif' $s={13}>AaBbCcDd</Sample>样式4</StyleCard>
            <Carets><Caret up /><Caret /><Caret /></Carets>
          </StyleBox>
        </RGroup>
        <RGroup $w={75} $pl={8}>
          <Big $w={58}><P s={22} d="M1 2h7M1 6h6M1 11h4v4H1zM7 11h8M7 15h8M8 9l3-8 3 8M9 6h4" sw={0.8} /><IconText as="span">文字排版<Caret /></IconText></Big>
        </RGroup>
        <RGroup $w={116} $pl={8}>
          <Big $w={62}><Search size={24} strokeWidth={1.1} /><IconText as="span">查找替换<Caret /></IconText></Big>
          <Big $w={40}><P s={22} d="M4 1v12l3-3 2 5 2-1-2-5h4z" sw={0.8} /><IconText as="span">选择<Caret /></IconText></Big>
        </RGroup>
      </Ribbon>
      <DocArea>
        <Sheet>
          <Strong>制在观察内存时需要频繁使用。</Strong>
          <RightLine $hang>算需要以 2 的幂次相加依次来计算，</RightLine>
          <RightLine>（为零不需要），最好通过计算器来进</RightLine>
          <RightLine />
          <RightLine>分配空间，大小为 4 字节，会看到</RightLine>
        </Sheet>
        <PinCol>
          <PinBox aria-label="定位"><svg width="16" height="18" viewBox="0 0 16 18"><path d="M8 1a6 6 0 0 1 6 6c0 4-4 7-6 10C6 14 2 11 2 7a6 6 0 0 1 6-6z" fill="#3f83e0" /><circle cx="8" cy="7" r="2.500" fill="#fff" /></svg></PinBox>
        </PinCol>
        <ScrollCol>
          <P s={10} d="M2 2h12M2 6h12M8 6v8" />
          <Caret up />
          <ScrollThumb />
          <ScrollEnd><Caret /><P s={8} d="M2 6l6-5 6 5zM2 14l6-5 6 5z" /><P s={8} d="M4 2h8v12H4z" /><P s={8} d="M2 2l6 5 6-5zM2 9l6 5 6-5z" /></ScrollEnd>
        </ScrollCol>
        <SideTools>
          <P w={18} h={6} vb="0 0 18 6" d="M0 1h18M0 5h18" c="#ccc" />
          <Rocket size={18} strokeWidth={1.3} /><MousePointer2 size={18} strokeWidth={1.3} /><PenLine size={18} strokeWidth={1.3} />
          <P s={18} d="M5 4h10M3 2.500a1.500 1.500 0 1 0 .1 0M1 12h9M12 10.500a1.500 1.500 0 1 0 .1 0" />
          <P s={18} d="M8 1.500a6.500 6.500 0 1 0 .1 0M6 6q0-2 2-2t2 2q0 1-2 2v2M8 11.500v1" />
          <ImageIcon size={18} strokeWidth={1.3} />
          <P s={18} d="M5 13a6 6 0 1 1 6 0v2H5zM8 4l-3 3 3 3 3-3z" />
          <BookOpen size={18} strokeWidth={1.3} />
          <P w={18} h={8} vb="0 0 18 8" d="M3 2a2 2 0 1 0 .1 0M9 2a2 2 0 1 0 .1 0M15 2a2 2 0 1 0 .1 0" sw={1.5} />
        </SideTools>
      </DocArea>
      <StatusBar>
        <Eye size={17} strokeWidth={1.3} /><FileText size={16} strokeWidth={1.3} /><P d={JUST} /><BookOpen size={16} strokeWidth={1.3} /><Globe size={16} strokeWidth={1.3} /><PenLine size={16} strokeWidth={1.3} />
        <span>100%</span><Caret />
        <P s={10} d="M0 8h16" sw={2} />
        <P w={122} h={18} vb="0 0 122 18" d="M0 9h66M78 9h44M54 4v10M72 3a6 6 0 1 0 .1 0" />
        <P s={10} d="M0 8h16M8 0v16" sw={2} />
        <P s={14} d="M1 5V1h4M11 1h4v4M15 11v4h-4M5 15H1v-4M1 1l4 4M15 1l-4 4M1 15l4-4M15 15l-4-4" />
      </StatusBar>
    </>
  );
}

function Tasks() {
  return (
    <TaskBar>
      <StartIcons>
        <P s={16} d="M0 2l7-1v7H0zM8 1l8-1v8H8zM0 9h7v6l-7-1zM8 9h8v7l-8-1z" fill="#e8e8e8" c="none" />
        <Search size={17} strokeWidth={1.5} />
        <P s={16} d="M1 1v2h9V1M1 5h9v6H1zM1 15v-2h9v2M14 1v3M14 7v8" />
      </StartIcons>
      <Task><Folder />2 数据的类型、数据的...</Task>
      <Task><Folder />2</Task>
      <Task>
        <svg width="22" height="22" viewBox="0 0 22 22"><circle cx="11" cy="11" r="10" fill="#e8453c" /><path d="M11 11L2 6a10 10 0 0 0 9 15z" fill="#34a853" /><path d="M11 11h10a10 10 0 0 1-10 10z" fill="#fbbc05" /><circle cx="11" cy="11" r="5" fill="#fff" /><circle cx="11" cy="11" r="4" fill="#4285f4" /></svg>
        百度翻译-200种语言互...
      </Task>
      <Task>
        <svg width="22" height="22" viewBox="0 0 22 22"><path d="M1 3l12-2 8 6-1 13-12 1-7-6z" fill="#21c5a0" /><path d="M4 4h14v14H4z" fill="#000" /><path d="M9 7Q6 6 6 9t3 2M12 6v5h3M6 15h5" stroke="#fff" fill="none" /></svg>
        1_decimal_conversion...
      </Task>
      <Task $on><NotepadIcon s={20} />*新建文本文档.txt - 记...</Task>
      <Task>
        <svg width="20" height="20" viewBox="0 0 20 20"><rect width="20" height="20" rx="3" fill="#1f6fe0" /><path d="M7 16V5h4q4 0 4 3t-4 3H7" stroke="#fff" strokeWidth="2" fill="none" /></svg>
        云直播(window64)4.8.2
      </Task>
      <Task><P s={20} d="M1 2h3l1 8 3-8 2 8 3-8h3l-5 12H9L8 10l-2 4H4z" fill="#e8542f" c="none" />2.3 整型进制转换.docx...</Task>
      <Task>
        <svg width="20" height="20" viewBox="0 0 20 20"><ellipse cx="9" cy="12" rx="8" ry="7" fill="#9cc3dd" /><circle cx="6" cy="9" r="2" fill="#e35" /><circle cx="5" cy="14" r="2" fill="#3a6" /><path d="M10 12l7-11 2 2-7 10z" fill="#e0a030" /></svg>
        无标题 - 画图
      </Task>
      <Tray>
        <P s={14} d="M5 0v5M11 0v5M3 5h10v4l-3 3H6L3 9zM8 12v4" fill="#ccc" />
        <Battery>100%</Battery>
        <P s={10} d="M1 12l7-8 7 8" sw={2} />
        <P s={12} d="M1 1h5v14l-3-3-2 3zM9 1h5v14l-3-3-2 3z" fill="#ccc" />
        <Mic size={15} /><P s={14} d="M2 4h9v9H2zM11 6h4v5h-4zM4 2v2M8 2v2" /><Monitor size={14} /><P s={14} d="M1 6h3l4-4v12l-4-4H1zM10 5q2 3 0 6M12 3q4 5 0 10" />
        <span>中</span><SogouIcon s={14} />
        <svg width="24" height="26" viewBox="0 0 24 26" fill="none" stroke="#ccc"><path d="M1 4h16v12H8l-4 4v-4H1zM4 8h10M4 12h10" strokeWidth="1.500" /><circle cx="16" cy="18" r="6" fill="#33383c" /><path d="M15 16l1.500-1v6" /></svg>
      </Tray>
    </TaskBar>
  );
}

function Paint() {
  return (
    <PaintWindow>
      <PaintTitle>无标题 - 画图<WinButtons $gap={43}><Min /><Max /><Close /></WinButtons></PaintTitle>
      <PaintHelp><P s={10} d="M1 12l7-7 7 7" sw={1.5} c="#999" /><HelpDot aria-label="帮助">?</HelpDot></PaintHelp>
      <PaintRibbon>
        <PGroup $w={145}>
          <ImageTools>
            <IconText><P s={13} d="M4 0v12h12M0 4h12v12" c="#aaa" />裁剪</IconText>
            <IconText><P s={13} d="M1 6h9v9H1zM6 3V1h9v9h-2" c="#4a7ebb" />重新调整大小</IconText>
            <IconText><P s={13} d="M2 14L14 14 14 4z" fill="#2f77c4" c="none" />旋转<Caret /></IconText>
          </ImageTools>
          图像
        </PGroup>
        <PGroup $w={75}>
          <ToolGrid>
            <PTool $on aria-label="铅笔"><P d="M2 14l1-4 9-9 3 3-9 9z" fill="#f5c95c" c="#8a6420" /></PTool>
            <PTool aria-label="填充"><P d="M7 2l7 6-6 6-6-5zM2 9q-2 3-1 6" fill="#b8cfe6" c="#5b7690" /></PTool>
            <PTool>A</PTool>
            <PTool aria-label="橡皮"><P d="M1 10l7-8 6 3-7 8-5 1z" fill="#f0a3a0" c="#c46a68" /></PTool>
            <PTool aria-label="取色"><P d="M2 15l1-4 6-6 3 3-6 6zM9 4l3-3 3 3-3 3z" fill="#4a88c8" c="#2d5f94" /></PTool>
            <PTool aria-label="放大镜"><P d="M6 1a5 5 0 1 0 .1 0M10 10l5 5" fill="#dcebf7" c="#8a8f96" sw={1.5} /></PTool>
          </ToolGrid>
          工具
        </PGroup>
        <PGroup $w={51}>
          <PBig $w={40}>
            <svg width="30" height="29" viewBox="0 0 30 29"><path d="M.5.5h29v28H.5z" fill="#fff" stroke="#aaa" /><path d="M3 13Q8 4 15 7Q6 12 6 19Q8 25 16 22" stroke="#f26a2a" strokeWidth="4" fill="none" /><path d="M27 2l-8 13 4 2z" fill="#b9b9b9" /><path d="M18 14q-6 6-3 10 7 0 8-7z" fill="#a87435" /></svg>
            <span>刷<br />子 ▾</span>
          </PBig>
        </PGroup>
        <PGroup $w={220}>
          <PBody>
            <ShapeBox>
              {SHAPES.map((d, i) => (
                <React.Fragment key={i}>
                  <P s={17} d={d} c="#3e6f9f" />
                  {i % 7 === 6 && <Caret up={i === 6} />}
                </React.Fragment>
              ))}
            </ShapeBox>
            <PDim>
              <IconText><P s={14} d="M1 1h10M1 1v14h12V9M5 11l8-9 2 2-8 9z" />轮廓 <Caret /></IconText>
              <IconText><P s={14} d="M7 1l7 6-6 6-6-5zM1 15h14" fill="#ccc" />填充 <Caret /></IconText>
            </PDim>
          </PBody>
          形状
        </PGroup>
        <PGroup $w={50}>
          <PBig $w={40}>
            <svg width="34" height="28" viewBox="0 0 34 28" fill="#1f3a63"><path d="M0 1h34v1H0zM0 6h34v2H0zM0 12h34v4H0zM0 20h34v6H0z" /></svg>
            <span>粗<br />细 ▾</span>
          </PBig>
        </PGroup>
        <PGroup $w={338}>
          <PBody>
            <PBig $w={40} $on><Well $c="#000" $s={28} /><span>颜<br />色 1</span></PBig>
            <PBig $w={40}><Well $c="#fff" $s={24} /><span>颜<br />色 2</span></PBig>
            <Palette>{COLORS.map((c, i) => <Swatch key={i} $c={c} aria-label={`颜色 ${i + 1}`} />)}</Palette>
            <PBig $w={40}><Well $s={28} $c="linear-gradient(transparent, #888), linear-gradient(90deg,#f33,#fc2,#3c3,#2cc,#33e,#e3c,#f33)" /><span>编辑<br />颜色</span></PBig>
          </PBody>
          颜色
        </PGroup>
        <PGroup $w={73}>
          <PBig $w={70}>
            <Well $c="#fff" $s={28}>
              <svg width="20" height="24" viewBox="0 0 20 24"><defs><linearGradient id="drop" x1="0" y1="0" x2="0.4" y2="1"><stop offset="0" stopColor="#22b8f0" /><stop offset=".5" stopColor="#7a6ce0" /><stop offset=".8" stopColor="#e8407a" /><stop offset="1" stopColor="#fbb040" /></linearGradient></defs><path d="M10 0a9 9 0 0 1 9 9c0 6-6 7-8 14C9 18 1 15 1 9a9 9 0 0 1 9-9z" fill="url(#drop)" /></svg>
            </Well>
            <span>使用画图 3<br />D 进行编辑</span>
          </PBig>
        </PGroup>
      </PaintRibbon>
      <Strip />
      <PaintCanvas>
        <svg width="1038" height="640" viewBox="0 0 1038 640" fill="none" stroke="#1a1a1a" strokeWidth="3">
          <g transform="translate(498 -1) scale(.3333)">
            <circle cx="690" cy="897" r="52" fill="#fbdcb0" fillOpacity=".8" stroke="none" />
            {STROKES_MID.map(d => <path key={d} d={d} />)}
            <path d="M692 893l8-22 26-18 9 7-28 28z" fill="#fff" />
          </g>
          <g transform="translate(-2 -1) scale(.3333 .3571)">{STROKES.map(d => <path key={d} d={d} />)}</g>
        </svg>
        <CanvasText>{'0111  1011'}</CanvasText>
      </PaintCanvas>
      <Workspace />
    </PaintWindow>
  );
}

function NotepadApp() {
  return (
    <Notepad>
      <NoteTitle><NotepadIcon />*新建文本文档.txt - 记事本<WinButtons $gap={43}><Min /><Max /><Close /></WinButtons></NoteTitle>
      <NoteMenu>{['文件(F)', '编辑(E)', '格式(O)', '查看(V)', '帮助(H)'].map(m => <button key={m}>{m}</button>)}</NoteMenu>
      <NoteBody>
        <NoteText>
          <p>1MB =1024KB<br />1GB =1024MB</p>
          <p>十进制  0-9</p>
          <p>八进制  0-7</p>
          <p>十六进制 0-9 a-f</p>
          <p>123十进制</p>
          <p><Selected>二进制</Selected><Selected>0000 0000 0000 0000 0000 0000 0111 1011</Selected></p>
          <p>十六进制<br />7b</p>
        </NoteText>
        <NoteScroll><P s={9} d="M1 12l7-7 7 7" sw={3} c="#555" /><NoteThumb /><P s={9} d="M1 4l7 7 7-7" sw={3} c="#555" /></NoteScroll>
      </NoteBody>
      <NoteStatus><NoteCell>第 16 行, 第 1</NoteCell><NoteCell>100%</NoteCell><NoteCell>Windows (C</NoteCell><NoteCell>UTF-8</NoteCell></NoteStatus>
    </Notepad>
  );
}

const PARAS = [
  '你要快速的能够转成16进制啊， 这个除了这个。 频率更高， 也\n就是说你把这个转成这个， 这个转这个其实是简单的， 你有没\n有观察到我为什么把原来把它每四位写到一起， 因为每四位\n呢， 其实对应16进制的一个数的， 所以我才把每四位故意写到\n一起。 我是有意为之的啊， 那你看这个这个位置不就是七吗？\n 因为这边是二的。 零次幂啊， 单独看这个位置啊， 整体来看\n啊，',
  '这边是二的零次幂， 所以是一， 这里是二的一次幂二， 那那这\n个是二次二的二次幂四， 那1+2+4不就是七吗？ 这个位置。 然\n后这边呢， 这里是二的零次幂加二的一次幂， 这这这是三， 然\n后这边呢是二的三次幂八， 那加起来不就是11吗？ 那11呢？ 对\n应的就是b啊。',
];

export default function App() {
  return (
    <Page>
      <Global />
      <Player>
        <Frame>
          <Writer />
          <Tasks />
          <ShareBanner>
            <P s={11} d="M2 16v-5M6 16V8M10 16V5M14 16V1" sw={2} c="#2cc05a" />
            您正在共享屏幕<time>01:15:45</time><P s={13} d="M1 5l7 7 7-7" sw={1.5} />
          </ShareBanner>
          <ImeBar>
            <SogouIcon />
            <ImeTools>
              <span>中</span><span>°，</span><Smile size={15} strokeWidth={2.5} /><Mic size={15} strokeWidth={2.5} /><Keyboard size={16} />
              <P s={14} d="M5 1a3 3 0 1 0 .1 0M0 15q0-6 5-6t5 6z" fill="#aaa" c="none" /><Shirt size={16} fill="#0a76dc" /><LayoutGrid size={15} fill="#0a76dc" />
            </ImeTools>
          </ImeBar>
          <Bubble>15:50</Bubble>
          <Paint />
          <NotepadApp />
          <GhostLine $y={748} $s={38} $c="rgba(125,125,125,.75)">关注公众号【封神考研】</GhostLine>
          <GhostRule />
          <GhostLine $y={818} $s={37} $c="rgba(170,170,170,.75)" $i>获取后续和更多考研资料</GhostLine>
          <TopShade />
          <Brand>
            <svg width="49" height="40" viewBox="0 0 49 40"><path d="M0 0Q18 0 32 10V34Q20 24 0 25z" fill="#555" /><path d="M17 19Q30 6 49 5V30Q28 28 17 40z" fill="#4a4a4a" fillOpacity=".75" /><path d="M17 19Q23 12 32 9V32Q22 34 17 40z" fill="#2f2f2f" /></svg>
            <BrandText>中国大学<BrandLatin>MOOC</BrandLatin></BrandText>
          </Brand>
          <Note $x={1208} $y={484}>二进制转十六进制</Note>
          <Note $x={1165} $y={570}>每四位对应 十六进制的一个值</Note>
          <Note $x={1053} $y={632}>
            0111 依次2**3 + 2**2 + 2**1 + 2**0 =必须1才加
            <Terms $cols="260px 48px 48px 48px 48px 62px 38px auto"><span>所以</span><span>4</span><span>+</span><span>2</span><span>+</span><span>1</span><span>=</span><span>7</span></Terms>
          </Note>
          <Note $x={1049} $y={782}>
            1011 依次2**3 + 2**2 + 2**1 + 2**0 =必须1才加
            <Terms $cols="150px 98px 108px 48px 48px 62px 38px auto"><span>所以</span><span>8</span><span>+</span><span>2</span><span>+</span><span>1</span><span>=</span><span>11(b)</span></Terms>
          </Note>
          <BottomShade />
        </Frame>
        <CenterPlay aria-label="播放"><svg width="36" height="38" viewBox="0 0 36 38"><path d="M8 1l29 18L8 37z" fill="#fff" /></svg></CenterPlay>
        <Drawer aria-label="收起"><P w={18} h={26} vb="0 0 18 26" d="M4 3l11 10L4 23" sw={3.5} c="#fff" /></Drawer>
        <Controls>
          <TimeRow>
            <time>00:15:49</time>
            <Seek type="range" min={0} max={1550} defaultValue={949} aria-label="播放进度" />
            <time>00:25:50</time>
          </TimeRow>
          <ButtonRow>
            <Cluster $gap={47}>
              <IconButton aria-label="播放"><svg width="40" height="36" viewBox="0 0 40 36"><path d="M8 3q0-3 3-2l21 14q3 3 0 6L11 35q-3 1-3-2z" fill="#fff" /></svg></IconButton>
              <IconButton aria-label="上一个"><svg width="32" height="30" viewBox="0 0 32 30" fill="#fff"><rect x="1" width="5" height="30" rx="2" /><path d="M31 3q0-3-3-2L12 12q-3 3 0 6l16 11q3 1 3-2z" /></svg></IconButton>
              <IconButton aria-label="下一个"><svg width="32" height="30" viewBox="0 0 32 30" fill="#fff"><rect x="26" width="5" height="30" rx="2" /><path d="M1 3q0-3 3-2l16 11q3 3 0 6L4 29q-3 1-3-2z" /></svg></IconButton>
            </Cluster>
            <Cluster $gap={64} $end>
              <TextButton>字幕</TextButton><TextButton $warm>2x</TextButton><TextButton $warm>超清</TextButton>
            </Cluster>
            <Cluster $gap={48}>
              <IconButton aria-label="音量"><svg width="40" height="36" viewBox="0 0 40 36" fill="none" stroke="#fff" strokeWidth="3" strokeLinejoin="round" strokeLinecap="round"><path d="M5 11h6L22 2v32L11 25H5q-3 0-3-3v-8q0-3 3-3zM27 12q4 6 0 12M31 5q11 13 0 26" /></svg></IconButton>
              <IconButton aria-label="全屏"><svg width="38" height="36" viewBox="0 0 38 36" fill="none" stroke="#fff" strokeWidth="4"><path d="M2 13V5q0-3 3-3h7M26 2h7q3 0 3 3v8M36 23v8q0 3-3 3h-7M12 34H5q-3 0-3-3v-8" /></svg></IconButton>
            </Cluster>
          </ButtonRow>
        </Controls>
      </Player>
      <Sidebar>
        <Tabs>
          <Tab>视频</Tab><Tab $on>文稿<TabMark /></Tab><Tab>课件</Tab>
        </Tabs>
        <Script>
          <HeadHaze />
          <Para><Smear><Blob $skip={2} $w={54} /><Blob $skip={36} $w={290} /><Blob $skip={34} $w={0} /></Smear>{'但我们有一个常用的场景呢，\n 是二进制的，'}</Para>
          <Para>{PARAS[0]}</Para>
          <Para>{PARAS[1]}<Smear><Blob $skip={20} $w={26} /><Blob $skip={34} $w={124} /><Blob $skip={12} $w={96} /><Blob $skip={44} $w={94} /></Smear></Para>
          <SmearRows>
            {BLOBS.map((row, i) => <Smear key={i}>{row.map(([skip, w, blue], j) => <Blob key={j} $skip={skip} $w={w} $blue={blue} />)}</Smear>)}
          </SmearRows>
          <Haze />
          <ScriptNote>所以就是二进制转十六进制7b</ScriptNote>
        </Script>
      </Sidebar>
    </Page>
  );
}
